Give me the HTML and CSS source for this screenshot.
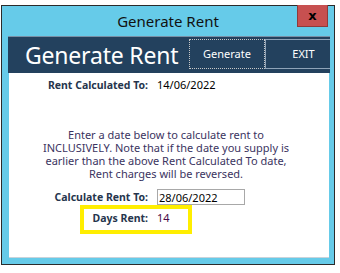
FILE: index.html
```html
<!DOCTYPE html>
<html>
<head>
    <meta name="viewport" content="width=device-width, initial-scale=1.0">
    <title>Generate Rent</title>
    <link rel="stylesheet" href="styles.css">
</head>
<body>
    <div class="window">
        <div class="titlebar">
            <span></span>
            <span class="title">Generate Rent</span>
            <button class="close">x</button>
        </div>

        <div class="panel">
            <!-- dark header with the two action buttons -->
            <div class="header">
                <h1>Generate Rent</h1>
                <button class="hbtn focus">Generate</button>
                <button class="hbtn">EXIT</button>
            </div>

            <div class="body">
                <div class="row first">
                    <span class="label">Rent Calculated To:</span>
                    <span class="value">14/06/2022</span>
                </div>

                <p class="note">Enter a date below to calculate rent to<br>INCLUSIVELY. Note that if the date you supply is<br>earlier than the above Rent Calculated To date,<br>Rent charges will be reversed.</p>

                <div class="row calc">
                    <span class="label">Calculate Rent To:</span>
                    <input class="date" type="text" value="28/06/2022">
                </div>

                <div class="highlight">
                    <div class="row days">
                        <span class="label">Days Rent:</span>
                        <span class="value num">14</span>
                    </div>
                </div>
            </div>
        </div>
    </div>
</body>
</html>
```

FILE: styles.css
```css
* {
    margin: 0;
    padding: 0;
    box-sizing: border-box;
}
body {
    background: #ffffff;
    font-family: "Noto Sans", "Open Sans", sans-serif;
    width: 340px;
    height: 273px;
    overflow: hidden;
}
.window {
    margin: 5px 0 0 1px;
    width: 334px;
    height: 260px;
    background-color: #66cbe9;
    border: 1px solid #2b2b2b;
}
.titlebar {
    display: grid;
    grid-template-columns: 1fr auto 1fr;
    align-items: start;
    height: 30px;
}
.title {
    font-size: 15px;
    color: #111;
    line-height: 30px;
}
.close {
    justify-self: end;
    margin: -1px 6px 0 0;
    width: 31px;
    height: 22px;
    background-color: #c75050;
    border: 1px solid #8f3a3a;
    border-top: none;
    font-family: "DejaVu Sans", sans-serif;
    font-weight: bold;
    font-size: 13px;
    line-height: 16px;
    color: #000;
}
.panel {
    margin: 0 4px 0 6px;
}
.header {
    display: flex;
    align-items: center;
    height: 37px;
    background-color: #23415e;
    border-top: 1px solid #7890a6;
    overflow: hidden;
}
.header h1 {
    flex: none;
    font-weight: normal;
    font-size: 23px;
    letter-spacing: -0.2px;
    line-height: 30px;
    color: #fff;
    padding-left: 17px;
    width: 181px;
    white-space: nowrap;
}
.hbtn {
    flex: none;
    width: 76px;
    height: 30px;
    margin-top: -3px;
    background: transparent;
    color: #fff;
    font-family: "Noto Sans", sans-serif;
    font-size: 11px;
    border: 1px solid #8fa3b8;
    border-right: none;
}
.hbtn.focus {
    border: 1px dotted #c8c8c8;
}
.body {
    background: #fff;
    height: 185px;
    margin-left: 1px;
    margin-right: 1px;
    border-bottom: 1px solid #c9d3da;
    padding-top: 5px;
}
.row {
    display: grid;
    grid-template-columns: 139px auto;
    column-gap: 9px;
    align-items: center;
    font-size: 11px;
    line-height: 14px;
}
.label {
    text-align: right;
    font-weight: bold;
    font-size: 10.5px;
    color: #26354d;
}
.value {
    color: #000;
}
.note {
    margin-top: 36px;
    padding-right: 6px;
    text-align: center;
    font-size: 11px;
    line-height: 13px;
    color: #3b3461;
}
.calc {
    margin-top: 9px;
}
.date {
    width: 88px;
    height: 16px;
    border: 1px solid #a8a8a8;
    font-family: "Noto Sans", sans-serif;
    font-size: 11px;
    padding-left: 1px;
    color: #000;
}
.highlight {
    margin: 0 0 0 71px;
    width: 112px;
    height: 29px;
    border: 4px solid #ffee00;
    padding-top: 2px;
}
.days {
    grid-template-columns: 64px auto;
}
.num {
    color: #4a0a4a;
}
```
